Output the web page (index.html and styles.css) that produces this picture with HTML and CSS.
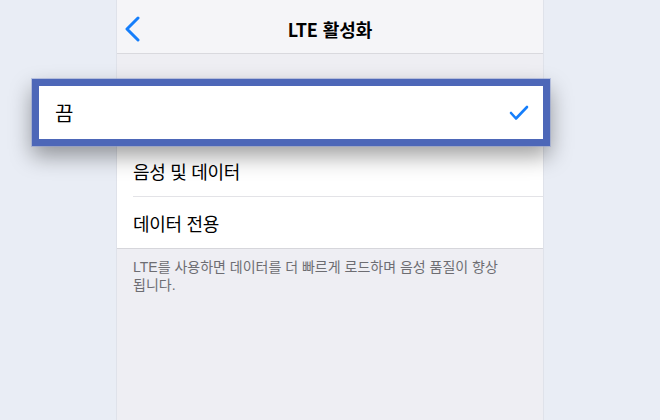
FILE: index.html
```html
<!DOCTYPE html>
<html lang="ko">
<head>
<meta charset="utf-8">
<title>LTE 활성화</title>
<link rel="stylesheet" href="styles.css">
</head>
<body>
<div class="stage">
  <div class="screen">
    <header class="nav">
      <svg class="back" width="16" height="26" viewBox="0 0 16 26"><path d="M13 2 L2 13 L13 24" fill="none" stroke="#157efb" stroke-width="3" stroke-linecap="round" stroke-linejoin="round"/></svg>
      <h1 class="title">LTE 활성화</h1>
    </header>
    <ul class="group">
      <li class="row">끔</li>
      <li class="row">음성 및 데이터</li>
      <li class="row">데이터 전용</li>
    </ul>
    <p class="note">LTE를 사용하면 데이터를 더 빠르게 로드하며 음성 품질이 향상<br>됩니다.</p>
  </div>
  <div class="callout">
    <span class="callout-label">끔</span>
    <svg class="check" width="20" height="16" viewBox="0 0 20 16"><path d="M2 8 L7 13.5 L18 2" fill="none" stroke="#157efb" stroke-width="2.6" stroke-linecap="round" stroke-linejoin="round"/></svg>
  </div>
</div>
</body>
</html>
```

FILE: styles.css
```css
* { box-sizing: border-box; }
html, body { margin: 0; padding: 0; }
body {
  width: 660px;
  height: 420px;
  overflow: hidden;
  background: #e9edf5;
  font-family: "Noto Sans CJK KR", "Noto Sans", sans-serif;
  color: #000;
}
.stage {
  position: relative;
  width: 660px;
  height: 420px;
  display: flex;
  justify-content: center;
}
.screen {
  width: 428px;
  height: 420px;
  background: #eeeef3;
  border-left: 1px solid #dfe2ea;
  border-right: 1px solid #dfe2ea;
  display: flex;
  flex-direction: column;
}
.nav {
  height: 54px;
  background: #f5f5f8;
  border-bottom: 1px solid #d9d9de;
  display: flex;
  align-items: center;
  justify-content: center;
  position: relative;
  flex-shrink: 0;
}
.back {
  position: absolute;
  left: 8px;
  top: 16px;
}
.title {
  margin: 0;
  font-size: 18px;
  font-weight: 700;
  letter-spacing: -0.1px;
  line-height: 1;
  margin-top: 4px;
}
.group {
  list-style: none;
  margin: 41px 0 0;
  padding: 0;
  background: #fff;
  border-bottom: 1px solid #d6d6db;
}
.row {
  height: 51px;
  display: flex;
  align-items: center;
  margin-left: 16px;
  font-size: 18px;
  letter-spacing: -0.3px;
  border-bottom: 1px solid #e3e3e7;
}
.row:last-child { border-bottom: none; }
.note {
  margin: 0;
  padding: 9px 16px 0;
  font-family: "Liberation Sans", "Noto Sans CJK KR", sans-serif;
  font-size: 14px;
  line-height: 18px;
  letter-spacing: 0;
  color: #6d6d72;
}
.callout {
  position: absolute;
  left: 32px;
  top: 79px;
  width: 518px;
  height: 67px;
  background: #fff;
  border: 7px solid #4d67b8;
  box-shadow: 0 0 0 1px rgba(140,155,210,0.5), 0 10px 22px rgba(0,0,0,0.38);
  display: flex;
  align-items: center;
  justify-content: space-between;
  padding: 0 14px 0 16px;
}
.callout-label {
  font-size: 20px;
  line-height: 1;
  margin-top: 1px;
}
.check {
  margin-top: 1px;
}
```
